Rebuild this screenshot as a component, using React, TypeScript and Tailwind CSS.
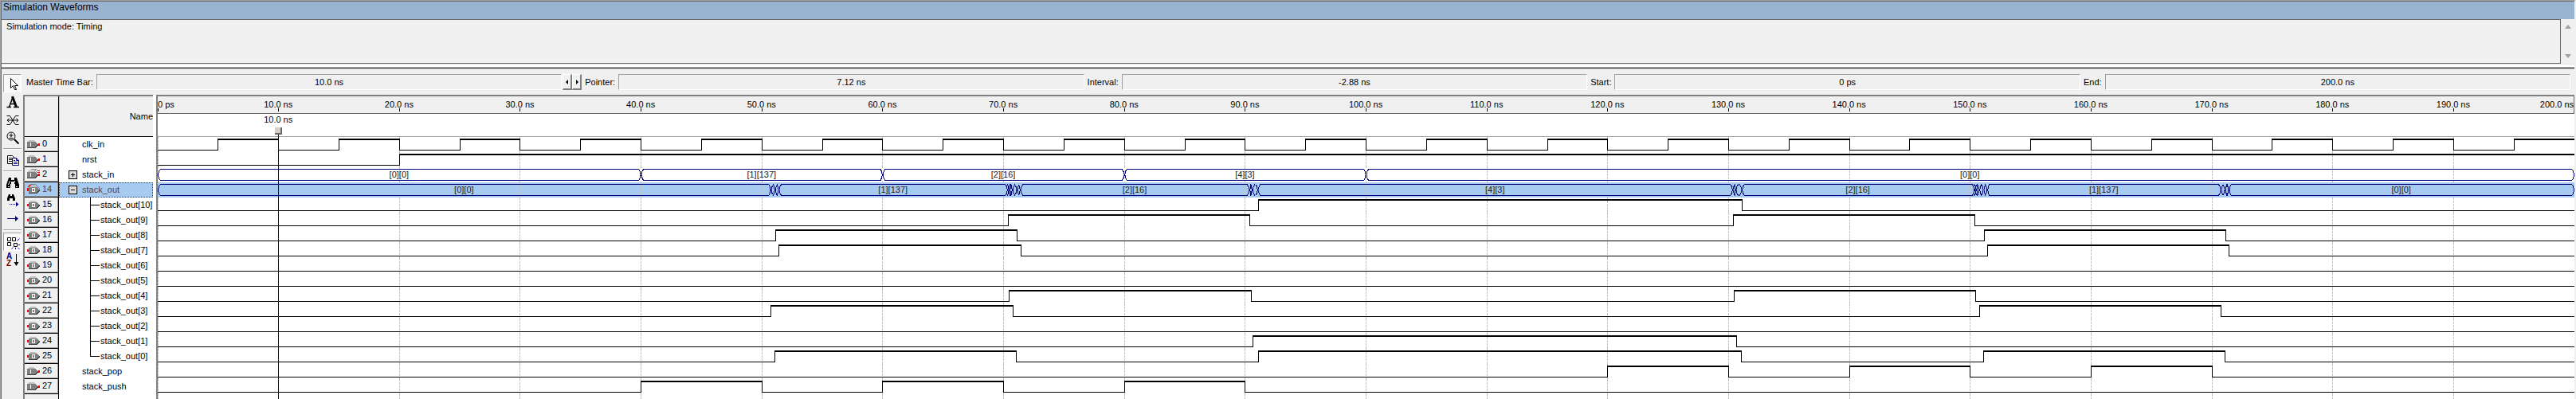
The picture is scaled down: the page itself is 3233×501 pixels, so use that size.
import React from "react";

const SPAN = 200;
const SNAP = 0.03;
const len = (t: number) => `${(t / SPAN) * 100}%`;
const pct = (t: number) => (t >= SPAN ? "100%" : len(Math.max(0, t - SNAP)));

type Bus = { cuts: number[][]; labels: string[] };
type Signal = {
  id: number;
  name: string;
  kind: "in" | "out";
  edges?: number[];
  bus?: Bus;
  child?: boolean;
  selected?: boolean;
};

const clock = Array.from({ length: 39 }, (_, i) => (i + 1) * 5);

const signals: Signal[] = [
  { id: 0, name: "clk_in", kind: "in", edges: clock },
  { id: 1, name: "nrst", kind: "in", edges: [20] },
  {
    id: 2,
    name: "stack_in",
    kind: "in",
    bus: { cuts: [[40], [60], [80], [100]], labels: ["[0][0]", "[1][137]", "[2][16]", "[4][3]", "[0][0]"] },
  },
  {
    id: 14,
    name: "stack_out",
    kind: "out",
    selected: true,
    bus: {
      cuts: [
        [50.75, 51.1, 51.4],
        [70.35, 70.5, 70.75, 71.1, 71.4],
        [90.35, 90.6, 91.05],
        [130.35, 130.6, 131.1],
        [150.35, 150.5, 150.75, 151.1, 151.4],
        [170.75, 171.1, 171.4],
      ],
      labels: ["[0][0]", "[1][137]", "[2][16]", "[4][3]", "[2][16]", "[1][137]", "[0][0]"],
    },
  },
  { id: 15, name: "stack_out[10]", kind: "out", child: true, edges: [91.1, 131.13] },
  { id: 16, name: "stack_out[9]", kind: "out", child: true, edges: [70.4, 90.4, 130.4, 150.4] },
  { id: 17, name: "stack_out[8]", kind: "out", child: true, edges: [51.14, 71.14, 151.14, 171.14] },
  { id: 18, name: "stack_out[7]", kind: "out", child: true, edges: [51.42, 71.42, 151.42, 171.42] },
  { id: 19, name: "stack_out[6]", kind: "out", child: true, edges: [] },
  { id: 20, name: "stack_out[5]", kind: "out", child: true, edges: [] },
  { id: 21, name: "stack_out[4]", kind: "out", child: true, edges: [70.47, 90.47, 130.47, 150.47] },
  { id: 22, name: "stack_out[3]", kind: "out", child: true, edges: [50.77, 70.77, 150.77, 170.77] },
  { id: 23, name: "stack_out[2]", kind: "out", child: true, edges: [] },
  { id: 24, name: "stack_out[1]", kind: "out", child: true, edges: [90.65, 130.65] },
  { id: 25, name: "stack_out[0]", kind: "out", child: true, edges: [51.07, 71.07, 91.1, 131.07, 151.07, 171.07] },
  { id: 26, name: "stack_pop", kind: "in", edges: [120, 130, 140, 150, 160, 170] },
  { id: 27, name: "stack_push", kind: "in", edges: [40, 50, 60, 70, 80, 90] },
];

const ticks = Array.from({ length: 19 }, (_, i) => (i + 1) * 10);

function PinIcon({ kind, group }: { kind: "in" | "out"; group: boolean }) {
  const input = kind === "in";
  const x = input ? 0 : 2;
  return (
    <svg width="17" height="13" viewBox="0 0 17 13" shapeRendering="crispEdges" className="shrink-0">
      {group && <path d={input ? "M5 0h6l3 3M3 2h7l3 3" : "M4 0h6l6 6M2 2h7l5 5"} fill="none" stroke="#808080" />}
      {group && <path d={input ? "M13 2h3M13 4h3" : "M2 1h3M1 3h3M0 5h3"} stroke="#ff0000" />}
      <path d={`M${x} 4l2-2h6l3 2z`} fill="#c0c0c0" />
      <path d={`M${x} 4h10l4 3-4 4h-10z`} fill="#808080" />
      <path d={`M${x} 11.5h10l4-4`} fill="none" stroke="#404040" />
      {input ? (
        <path d="M4 5h1v5h-1z" fill="#ffffff" />
      ) : (
        <path d="M6.5 5.5h3v4h-3z" fill="none" stroke="#ffffff" />
      )}
      <path d={input ? "M14 6h2v3h-2z" : "M0 6h2v3h-2z"} fill="#ff0000" />
    </svg>
  );
}

function GridLines({ phase }: { phase: number }) {
  return (
    <g stroke="#c0c0c0" strokeDasharray="3 1" strokeDashoffset={phase}>
      {[0, ...ticks].map((t) => (
        <rect key={t} x={pct(t)} y="0" width="1" height="19" stroke="none" fill="url(#grid-dash)" />
      ))}
      <defs>
        <pattern id="grid-dash" width="4" height="4" patternUnits="userSpaceOnUse">
          <rect width="4" height="3" fill="#c0c0c0" stroke="none" />
        </pattern>
      </defs>
    </g>
  );
}

function BitWave({ edges }: { edges: number[] }) {
  const stops = [0, ...edges, SPAN];
  return (
    <g fill="#000000">
      {stops.slice(0, -1).map((t, i) => {
        const high = i % 2 === 1;
        return <rect key={t} x={pct(t)} y={high ? 2 : 16} width={len(stops[i + 1] - t)} height={high ? 2 : 1} />;
      })}
      {edges.map((t) => (
        <rect key={t} x={pct(t)} y="2" width="1" height="15" />
      ))}
    </g>
  );
}

function BusWave({ bus, fill }: { bus: Bus; fill: string }) {
  const starts = [0, ...bus.cuts.map((c) => c[c.length - 1])];
  const ends = [...bus.cuts.map((c) => c[0]), SPAN];
  const all = bus.cuts.flat();
  return (
    <>
      {starts.map((s, i) => (
        <g key={s} fill="#000080">
          <rect x={pct(s)} y="2" width={len(ends[i] - s)} height="1" />
          <rect x={pct(s)} y="16" width={len(ends[i] - s)} height="1" />
        </g>
      ))}
      {all.map((t) => (
        <svg key={t} x={pct(t)} overflow="visible">
          <path d="M-2 1h5v17h-5z" fill={fill} />
        </svg>
      ))}
      {all.map((t) => (
        <svg key={t} x={pct(t)} overflow="visible">
          <path d="M-2.5 2.5l2 3.5v2l2 3v2l2 3.5M3.5 2.5l-2 3.5v2l-2 3v2l-2 3.5" fill="none" stroke="#000080" />
        </svg>
      ))}
      <path d="M0 1h3v17h-3z" fill={fill} />
      <path d="M3.5 2.5l-2 2v2l-1 1v4l1 1v2l2 2" fill="none" stroke="#000080" />
      <svg x="100%" overflow="visible">
        <path d="M-3 1h3v17h-3z" fill={fill} />
        <path d="M-3.5 2.5l2 2v2l1 1v4l-1 1v2l-2 2" fill="none" stroke="#000080" />
      </svg>
      {starts.map((s, i) => (
        <text key={s} x={pct((s + ends[i]) / 2)} y="13" textAnchor="middle" fill="#1a1a1a">
          {bus.labels[i]}
        </text>
      ))}
    </>
  );
}

function Field({ id, label, value, steps }: { id: string; label: string; value: string; steps?: boolean }) {
  return (
    <>
      <label htmlFor={id} className="whitespace-nowrap">
        {label}
      </label>
      <input
        id={id}
        readOnly
        value={value}
        className="h-5 min-w-0 flex-1 border border-t-[#a0a0a0] border-r-white border-b-white border-l-[#a0a0a0] bg-[#f0f0f0] text-center outline-none"
      />
      {steps && (
        <div className="-ml-[3px] flex">
          {["M5 2v6l-3-3z", "M3 2v6l3-3z"].map((d, i) => (
            <button
              key={d}
              aria-label={i ? "Next transition" : "Previous transition"}
              className="flex h-5 w-3 items-center justify-center border-t border-r-2 border-b-2 border-l border-t-white border-r-[#808080] border-b-[#808080] border-l-white bg-[#f0f0f0]"
            >
              <svg width="8" height="10" viewBox="0 0 8 10" className="shrink-0">
                <path d={d} fill="#000000" />
              </svg>
            </button>
          ))}
        </div>
      )}
    </>
  );
}

function Tool({ label, pressed, tall, children }: { label: string; pressed?: boolean; tall?: boolean; children: React.ReactNode }) {
  return (
    <button
      aria-label={label}
      className={
        pressed
          ? "flex h-[23px] w-[23px] items-center justify-center border border-t-[#a0a0a0] border-r-white border-b-white border-l-[#a0a0a0] bg-[#f8f8f8]"
          : tall
            ? "flex h-6 w-[23px] items-center justify-center"
            : "flex h-[22px] w-[23px] items-center justify-center"
      }
    >
      <svg width="18" height="18" viewBox="0 0 18 18" className="shrink-0" fill="none" stroke="#000000">
        {children}
      </svg>
    </button>
  );
}

const Divider = () => <div className="my-[2px] h-[2px] w-[23px] border-t border-b border-t-[#a0a0a0] border-b-white" />;

function ToolStrip() {
  return (
    <div className="flex w-[27px] shrink-0 flex-col items-center pt-[5px]">
      <Tool label="Selection tool" pressed>
        <path d="M6.5 2.5v12l3-3 2 5h2l-2-5h4z" fill="#ffffff" />
      </Tool>
      <Tool label="Text tool" tall>
        <path d="M1.500 15.500h5.500M10 15.500h7M4.500 15.500L9 3" strokeWidth="1.500" />
        <path d="M8.500 2l5 13.500" strokeWidth="3" />
        <path d="M6 11.500h6" strokeWidth="1.500" />
      </Tool>
      <Tool label="Waveform editing tool">
        <path d="M1.500 3.500h4l7 11h4M1.500 14.500h4l7-11h4" />
        <path d="M2 9h14M4.500 6.500L2 9l2.500 2.500M13.500 6.500L16 9l-2.500 2.500" />
      </Tool>
      <Tool label="Zoom tool">
        <circle cx="7" cy="7" r="5" />
        <path d="M4.500 6h5M7 3.500v5M4.500 9.500h5" />
        <path d="M11 11l5.500 5.500" strokeWidth="2" />
      </Tool>
      <Divider />
      <Tool label="Copy">
        <path d="M2.500 3.500h6l3 3v7h-9z" fill="#ffffff" />
        <path d="M4 6.500h4M4 8.500h4M4 10.500h4" />
        <path d="M8.500 6.500h5l3 3v6h-8z" fill="#ffffff" stroke="#000080" />
        <path d="M13.500 6.500v3h3M10 9.500h2M10 11.500h5M10 13.500h5" stroke="#000080" />
      </Tool>
      <Divider />
      <Tool label="Find">
        <path d="M4 3h3v3h4v-3h3l3 9v4h-5v-5h-1v-3h-4v3h-1v5h-5v-4z" fill="#000000" stroke="none" />
        <path d="M5.500 7l-2 5M11.500 7l-1 3M3 14.500h2M13 14.500h2" stroke="#ffffff" />
      </Tool>
      <Tool label="Find next" tall>
        <path d="M4 1h2v2h2v-2h2l2 5v3h-3v-3h-4v3h-3v-3z" fill="#000000" stroke="none" />
        <path d="M5 13.500h9" stroke="#000080" strokeDasharray="1 1" />
        <path d="M13 10.500v6l3.500-3z" fill="#000080" stroke="none" />
      </Tool>
      <Tool label="Go to">
        <path d="M2 8.500h11" stroke="#000080" />
        <path d="M12 5v7l4-3.500z" fill="#000080" stroke="none" />
      </Tool>
      <Divider />
      <Tool label="Snap to grid" pressed>
        <path d="M2.500 3.500h4v4h-4zM8.500 3.500h4v4h-4zM2.500 9.500h4v4h-4zM10.500 10.500h4v4h-4z" fill="#ffffff" />
        <path d="M14.500 7.500l3-3M16 12.500h2M15.500 16l2 2M12.500 16v2M9.500 15.500l-2 2" stroke="#0000ff" />
      </Tool>
      <Tool label="Sort">
        <text x="1" y="8" fontSize="10" fontWeight="bold" fill="#000080" stroke="none">A</text>
        <text x="1" y="17" fontSize="10" fontWeight="bold" fill="#800000" stroke="none">Z</text>
        <path d="M13.500 2v14" />
        <path d="M10.500 12h6l-3 5z" fill="#000000" stroke="none" />
      </Tool>
    </div>
  );
}

function NameCell({ s, last }: { s: Signal; last: boolean }) {
  if (s.child) {
    return (
      <div className="flex h-[19px] items-center pl-[39px]">
        <svg width="13" height="19" viewBox="0 0 13 19" shapeRendering="crispEdges" className="shrink-0">
          <path d={last ? "M0.500 0V9.500H12" : "M0.500 0V19M0 9.500H12"} fill="none" stroke="#000000" />
        </svg>
        <span className="whitespace-nowrap">{s.name}</span>
      </div>
    );
  }
  return (
    <div
      className={
        s.selected
          ? "flex h-[19px] items-center border border-dotted border-[#59350f] bg-[#a6caf0] pl-[11px] text-[#59462f]"
          : "flex h-[19px] items-center pl-3"
      }
    >
      {s.bus ? (
        <button aria-label={s.selected ? "Collapse" : "Expand"} className="mr-[6px] h-[11px] w-[11px] shrink-0">
          <svg width="11" height="11" viewBox="0 0 11 11" shapeRendering="crispEdges">
            <path d="M0.500 0.500h10v10h-10z" fill="#dcdcdc" stroke="#000000" />
            <path d={s.selected ? "M3 5.500h5" : "M3 5.500h5M5.500 3v5"} stroke="#000000" />
          </svg>
        </button>
      ) : (
        <span className="w-[17px]" />
      )}
      <span>{s.name}</span>
    </div>
  );
}

function SignalList() {
  return (
    <div className="flex w-[163px] shrink-0 flex-col border-t-2 border-l-2 border-t-[#808080] border-l-[#808080]">
      <table className="w-full table-fixed border-separate border-spacing-0 bg-white text-left">
        <colgroup>
          <col className="w-[43px]" />
          <col />
        </colgroup>
        <thead>
          <tr>
            <th aria-label="Index" className="h-[51px] border-r border-b border-black bg-[#f0f0f0] p-0" />
            <th className="h-[51px] border-b border-l border-b-black border-l-[#c8c8c8] bg-[#f0f0f0] p-0 text-right font-normal">
              Name
            </th>
          </tr>
        </thead>
        <tbody>
          {signals.map((s) => (
            <tr key={s.id}>
              <td className="border-r border-b border-black p-0">
                <div
                  className={
                    s.selected
                      ? "flex h-[18px] items-center gap-[2px] border-r border-b border-[#a0a0a0] bg-[#a6caf0] pl-[3px] text-[#59462f]"
                      : "flex h-[18px] items-center gap-[2px] border-r border-b border-[#a0a0a0] bg-[#f0f0f0] pl-[3px]"
                  }
                >
                  <PinIcon kind={s.kind} group={!!s.bus} />
                  <span>{s.id}</span>
                </div>
              </td>
              <td className="p-0">
                <NameCell s={s} last={s.id === 25} />
              </td>
            </tr>
          ))}
        </tbody>
      </table>
      <div className="flex flex-1 bg-white">
        <div className="w-[43px] border-r border-black bg-[#f0f0f0]" />
      </div>
    </div>
  );
}

function WavePane() {
  return (
    <div className="relative flex min-w-0 flex-1 flex-col border-t-2 border-l-2 border-t-[#808080] border-l-[#808080] bg-white">
      <div className="relative h-[22px] border-b border-[#696969] bg-[#f0f0f0]">
        <span className="absolute top-[3px] left-0">0 ps</span>
        <span className="absolute top-[15px] left-0 h-1 w-px bg-black" />
        {ticks.map((t) => (
          <span key={t} className="absolute top-0 flex w-0 flex-col items-center pt-[3px]" style={{ left: pct(t) }}>
            <span className="whitespace-nowrap">{t}.0 ns</span>
            <span className="absolute top-[15px] left-0 h-1 w-px bg-black" />
          </span>
        ))}
        <span className="absolute top-[3px] right-px">200.0 ns</span>
        <span className="absolute top-0 right-0 h-full w-px bg-[#696969]" />
      </div>
      <div className="h-[29px] border-b border-[#a0a0a0]" />
      {signals.map((s, i) => (
        <div key={s.id} className={s.selected ? "h-[19px] bg-[#a6caf0]" : "h-[19px]"}>
          <svg width="100%" height="19" shapeRendering="crispEdges" className="block">
            <GridLines phase={i * 19} />
            {s.bus ? <BusWave bus={s.bus} fill={s.selected ? "#a6caf0" : "#ffffff"} /> : <BitWave edges={s.edges ?? []} />}
          </svg>
        </div>
      ))}
      <div className="h-0 flex-1 overflow-hidden">
        <svg width="100%" height="19" shapeRendering="crispEdges" className="block">
          <GridLines phase={signals.length * 19} />
        </svg>
      </div>
      <div className="absolute top-[22px] bottom-0 flex w-0 flex-col items-center" style={{ left: pct(10) }}>
        <span className="h-[17px] whitespace-nowrap">10.0 ns</span>
        <span className="h-[9px] w-[9px] shrink-0 border-r-2 border-b-2 border-[#696969] bg-[#d4d0c8]" />
        <span className="absolute top-[26px] bottom-0 left-0 w-px bg-[#0000b4]" />
      </div>
    </div>
  );
}

export default function App() {
  return (
    <main className="flex min-h-screen flex-col border-t border-r-2 border-l border-t-[#a0a0a0] border-r-[#f0f0f0] border-l-[#a0a0a0] bg-[#f0f0f0] font-['Liberation_Sans',sans-serif] text-[11px] leading-[15px] text-black">
      <div className="flex flex-1 flex-col border-t border-l border-[#696969]">
        <h1 className="h-[22px] bg-[#99b4d1] pl-[2px] text-[12px]">Simulation Waveforms</h1>
        <div className="flex h-[56px]">
          <div className="flex-1 border-t border-r border-b border-[#696969] pt-px pl-[6px]">Simulation mode: Timing</div>
          <div className="flex w-[17px] flex-col items-center justify-between py-[6px]">
            {["M0 6L4 1l4 5z", "M0 1l4 5 4-5z"].map((d, i) => (
              <button key={d} aria-label={i ? "Scroll down" : "Scroll up"} className="h-[7px] w-2">
                <svg width="8" height="7" viewBox="0 0 8 7">
                  <path d={d} fill="#a0a0a0" />
                </svg>
              </button>
            ))}
          </div>
        </div>
        <div className="h-1 border-t border-t-[#e3e3e3] bg-white" />
        <div className="h-[3px] border-t border-b border-[#a0a0a0] bg-[#696969]" />
        <div className="flex flex-1 border-t border-white">
          <ToolStrip />
          <div className="flex min-w-0 flex-1 flex-col">
            <div className="flex h-[31px] items-center gap-1 pr-[5px] pb-px pl-1">
              <Field id="master" label="Master Time Bar:" value="10.0 ns" steps />
              <Field id="pointer" label="Pointer:" value="7.12 ns" />
              <Field id="interval" label="Interval:" value="-2.88 ns" />
              <Field id="start" label="Start:" value="0 ps" />
              <Field id="end" label="End:" value="200.0 ns" />
            </div>
            <div className="flex flex-1">
              <SignalList />
              <div className="w-1 shrink-0 bg-white" />
              <WavePane />
            </div>
          </div>
        </div>
      </div>
    </main>
  );
}
